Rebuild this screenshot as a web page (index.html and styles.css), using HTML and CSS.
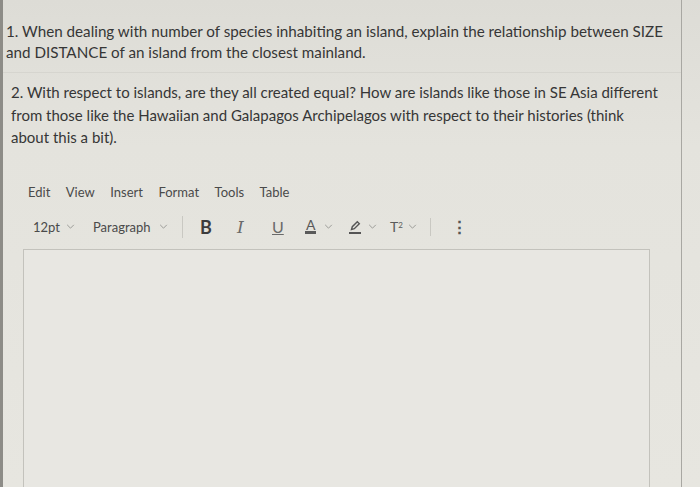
FILE: index.html
```html
<!DOCTYPE html>
<html>
<head>
<meta charset="utf-8">
<link rel="stylesheet" href="styles.css">
</head>
<body>
<div class="screen">
  <div class="card">
    <div class="q q1">1. When dealing with number of species inhabiting an island, explain the relationship between SIZE and DISTANCE of an island from the closest mainland.</div>
    <div class="q q2">2. With respect to islands, are they all created equal? How are islands like those in SE Asia different from those like the Hawaiian and Galapagos Archipelagos with respect to their histories (think about this a bit).</div>
    <div class="editor">
      <div class="menubar">
        <span>Edit</span><span>View</span><span>Insert</span><span>Format</span><span>Tools</span><span>Table</span>
      </div>
      <div class="toolbar">
        <span class="item w-size">12pt <svg class="chev" viewBox="0 0 10 6"><path d="M1 1l4 4 4-4"/></svg></span>
        <span class="item w-para">Paragraph <svg class="chev" viewBox="0 0 10 6"><path d="M1 1l4 4 4-4"/></svg></span>
        <span class="item w-sep"><span class="sep"></span></span>
        <span class="item w-b b">B</span>
        <span class="item w-i i">I</span>
        <span class="item w-u u">U</span>
        <span class="item w-a"><span class="al">A</span><svg class="chev" viewBox="0 0 10 6"><path d="M1 1l4 4 4-4"/></svg></span>
        <span class="item w-hl"><svg class="pen" viewBox="0 0 14 14"><path d="M3.5 9.5l0.8-2.8 5-5 2 2-5 5z"/><rect x="1" y="12" width="12" height="2" class="bar"/></svg><svg class="chev" viewBox="0 0 10 6"><path d="M1 1l4 4 4-4"/></svg></span>
        <span class="item w-t t">T<sup>2</sup><svg class="chev" viewBox="0 0 10 6"><path d="M1 1l4 4 4-4"/></svg></span>
        <span class="item w-sep2"><span class="sep short"></span></span>
        <span class="item dots">&#8942;</span>
      </div>
      <div class="area"></div>
    </div>
  </div>
</div>
</body>
</html>
```
FILE: styles.css
```css
html, body {
  margin: 0;
  padding: 0;
  height: 100%;
  overflow: hidden;
}
body {
  background: #e5e4de;
  font-family: Lato, "Open Sans", sans-serif;
  color: #363636;
}
.screen {
  height: 487px;
  border-left: 3px solid #8d8c87;
  background: linear-gradient(#dddcd6, #e4e3dd 30%, #e7e6e0);
  box-sizing: border-box;
}
.card {
  width: 679px;
  height: 100%;
  border-right: 1px solid #a8a7a2;
  box-sizing: border-box;
}
.q {
  font-size: 15.2px;
  line-height: 21px;
}
.q1 {
  padding: 21px 8px 9px 3px;
  border-bottom: 1px solid #d6d5cf;
}
.q2 {
  font-size: 15px;
  padding: 8px 20px 0 8px;
  line-height: 22.5px;
}
.editor {
  padding: 35px 0 0 20px;
}
.menubar {
  display: flex;
  gap: 15.5px;
  font-size: 13px;
  color: #4a4a4a;
  padding-left: 5px;
}
.toolbar {
  display: flex;
  align-items: center;
  margin-top: 16px;
  padding-left: 10px;
  font-size: 13px;
  color: #4a4a4a;
  height: 22px;
}
.item {
  display: flex;
  align-items: center;
  gap: 6px;
  flex: none;
}
.w-size { width: 60px; }
.w-para { width: 89px; gap: 8px; }
.w-sep { width: 18px; }
.w-b { width: 37px; }
.w-i { width: 35px; }
.w-u { width: 33px; }
.w-a { width: 43px; gap: 8px; }
.w-hl { width: 42px; gap: 6px; }
.w-t { width: 40px; gap: 0; }
.w-sep2 { width: 21px; }
.chev {
  width: 9px;
  height: 5px;
  fill: none;
  stroke: #9c9c98;
  stroke-width: 1.2;
}
.sep {
  width: 1px;
  height: 22px;
  background: #c9c8c2;
}
.sep.short {
  height: 18px;
}
.b {
  font-weight: 700;
  font-size: 18px;
  color: #3c3c3c;
}
.i {
  font-family: "DejaVu Serif", serif;
  font-style: italic;
  font-size: 17px;
  color: #6a6a6a;
}
.u {
  font-size: 16px;
  text-decoration: underline;
  color: #6a6a6a;
}
.al {
  font-size: 14px;
  color: #5a5a5a;
  border-bottom: 3px solid #5a5a5a;
  line-height: 12px;
  padding: 0 1px;
}
.pen {
  width: 14px;
  height: 14px;
  fill: none;
  stroke: #555;
  stroke-width: 1.4;
}
.pen .bar {
  fill: #555;
  stroke: none;
}
.t {
  font-size: 14px;
  color: #5a5a5a;
}
.t sup {
  font-size: 8px;
  margin-right: 5px;
  align-self: flex-start;
  margin-top: 2px;
}
.dots {
  font-size: 17px;
  color: #555;
  font-weight: 700;
}
.area {
  margin-top: 11px;
  width: 625px;
  height: 260px;
  border: 1px solid #c3c2bc;
  background: #e8e7e2;
}
```
